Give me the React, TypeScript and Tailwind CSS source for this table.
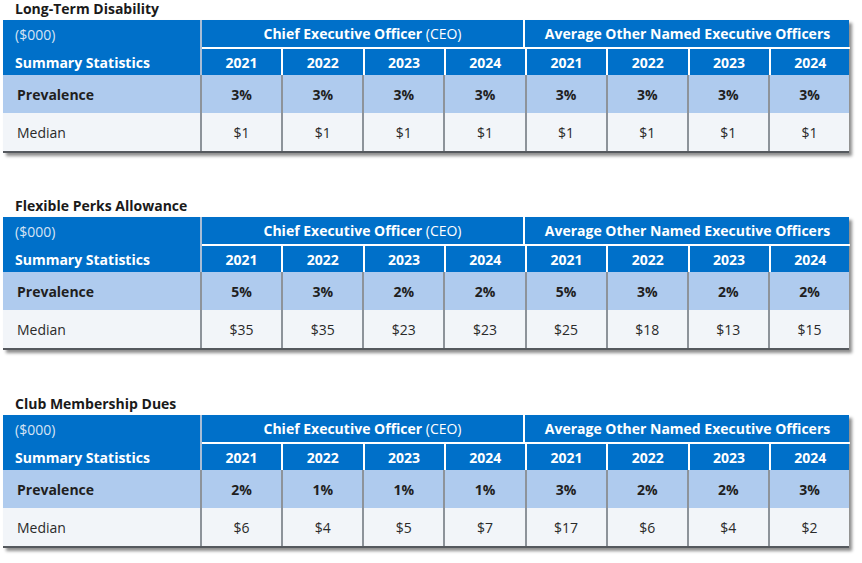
import React from 'react';

type Block = {
  title: string;
  prevalence: string[];
  median: string[];
};

const years = ['2021', '2022', '2023', '2024'];

const blocks: Block[] = [
  {
    title: 'Long-Term Disability',
    prevalence: ['3%', '3%', '3%', '3%', '3%', '3%', '3%', '3%'],
    median: ['$1', '$1', '$1', '$1', '$1', '$1', '$1', '$1'],
  },
  {
    title: 'Flexible Perks Allowance',
    prevalence: ['5%', '3%', '2%', '2%', '5%', '3%', '2%', '2%'],
    median: ['$35', '$35', '$23', '$23', '$25', '$18', '$13', '$15'],
  },
  {
    title: 'Club Membership Dues',
    prevalence: ['2%', '1%', '1%', '1%', '3%', '2%', '2%', '3%'],
    median: ['$6', '$4', '$5', '$7', '$17', '$6', '$4', '$2'],
  },
];

function StatTable({ block }: { block: Block }) {
  return (
    <div>
      <h3 className="pl-[15px] text-[14px] font-bold leading-[17px] text-[#1a1a1a] h-[20px]">{block.title}</h3>
      <div className="ml-[3px] w-[846px] shadow-[3px_3px_3px_rgba(0,0,0,0.45)]">
        {/* header */}
        <div className="flex bg-[#0070c9] text-white">
          <div className="w-[199px] shrink-0 border-r-2 border-[#a8bdd6] pl-[12px]">
            <div className="h-[29px] flex items-center text-[14px] text-[#d6e4f5]">($000)</div>
            <div className="h-[26px] flex items-center text-[14px] font-bold">Summary Statistics</div>
          </div>
          <div className="flex-1">
            <div className="flex h-[29px] border-b-2 border-white">
              <div className="w-[323px] border-r-2 border-white flex items-center justify-center text-[14px] font-bold">
                Chief Executive Officer&nbsp;<span className="font-normal">(CEO)</span>
              </div>
              <div className="flex-1 flex items-center justify-center text-[14px] font-bold">
                Average Other Named Executive Officers
              </div>
            </div>
            <div className="flex h-[26px]">
              {[...years, ...years].map((y, i) => (
                <div
                  key={i}
                  className={`w-[81px] flex-1 flex items-center justify-center text-[14px] font-bold ${i < 7 ? 'border-r-2 border-white' : ''}`}
                >
                  {y}
                </div>
              ))}
            </div>
          </div>
        </div>
        {/* prevalence */}
        <div className="flex h-[38px] bg-[#afcbee] text-[#1f1f1f]">
          <div className="w-[199px] shrink-0 border-r-2 border-[#8d939a] pl-[14px] flex items-center text-[14px] font-bold">
            Prevalence
          </div>
          {block.prevalence.map((v, i) => (
            <div
              key={i}
              className={`flex-1 flex items-center justify-center text-[14px] font-bold ${i < 7 ? 'border-r-2 border-[#8d939a]' : ''}`}
            >
              {v}
            </div>
          ))}
        </div>
        {/* median */}
        <div className="flex h-[40px] bg-[#f2f5f9] text-[#2a2a2a] border-b-2 border-[#55595e]">
          <div className="w-[199px] shrink-0 border-r-2 border-[#8d939a] pl-[14px] flex items-center text-[14px]">
            Median
          </div>
          {block.median.map((v, i) => (
            <div
              key={i}
              className={`flex-1 flex items-center justify-center text-[14px] ${i < 7 ? 'border-r-2 border-[#8d939a]' : ''}`}
            >
              {v}
            </div>
          ))}
        </div>
      </div>
    </div>
  );
}

export default function App() {
  return (
    <div className="w-[862px] h-[563px] bg-white overflow-hidden font-['Open_Sans',sans-serif]">
      <div className="flex flex-col gap-[44px]">
        {blocks.map((b, i) => (
          <div key={b.title} className={i === 2 ? 'mt-[1px]' : ''}>
            <StatTable block={b} />
          </div>
        ))}
      </div>
    </div>
  );
}
